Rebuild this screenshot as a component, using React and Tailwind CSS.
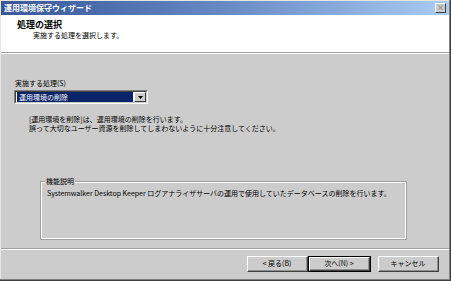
import React from "react";

const font = { fontFamily: '"Noto Sans CJK JP", "Noto Sans", sans-serif' };

function Btn({ children, def }) {
  return (
    <div className={`h-[16px] ${def ? "border border-black" : ""}`}>
      <div className="h-full border-t border-l border-white border-r border-b border-r-[#404040] border-b-[#404040] bg-[#cccccc]">
        <div className="h-full flex items-center justify-center border-r border-b border-r-[#909090] border-b-[#909090] text-[7px] leading-none text-black">
          {children}
        </div>
      </div>
    </div>
  );
}

export default function App() {
  return (
    <div className="w-[451px] h-[281px] bg-[#404040] pr-px pb-px" style={font}>
      <div className="w-full h-full bg-[#808080] pr-px pb-px">
        <div className="w-full h-full bg-[#cccccc] border-l border-t border-l-[#e8e6e0] border-t-[#e8e6e0] flex flex-col">
          {/* Title bar */}
          <div className="h-[14px] bg-[linear-gradient(90deg,#37579a_0%,#5d7fbb_40%,#7b9dd2_65%,#a8ccf2_100%)] flex items-center pl-[3px] pr-[3px]">
            <span className="text-white font-bold text-[8px] leading-none flex-1">運用環境保守ウィザード</span>
            <div className="w-[11px] h-[10px] bg-[#cccccc] border-t border-l border-white border-r border-b border-r-[#404040] border-b-[#404040] flex items-center justify-center">
              <span className="text-[#909090] text-[8px] leading-none font-bold">×</span>
            </div>
          </div>
          {/* Header */}
          <div className="h-[37px] bg-white pl-[16px] pt-[5px]">
            <div className="text-[9px] leading-[10px] font-bold text-black">処理の選択</div>
            <div className="text-[7px] leading-[9px] text-black pl-[16px] mt-[1px]">実施する処理を選択します。</div>
          </div>
          <div className="h-px bg-[#a0a0a0]" />
          <div className="h-px bg-white" />
          {/* Body */}
          <div className="flex-1 flex flex-col">
            <div className="pl-[14px] pt-[25px] text-[7px] leading-[9px] text-black">実施する処理(S)</div>
            <div className="ml-[13px] mt-[2px] w-[134px] h-[14px] border-t border-l border-[#808080] border-r border-b border-r-white border-b-white">
              <div className="w-full h-full border-t border-l border-[#404040] border-r border-b border-r-[#cccccc] border-b-[#cccccc] bg-white flex items-stretch pl-px">
                <div className="flex-1 bg-[#0a246a] flex items-center pl-[2px] overflow-hidden">
                  <span className="text-white text-[7px] leading-[9px] whitespace-nowrap">運用環境の削除</span>
                </div>
                <div className="w-[12px] ml-px bg-[#cccccc] border-t border-l border-white border-r border-b border-r-[#404040] border-b-[#404040] flex items-center justify-center">
                  <svg width="5" height="3" viewBox="0 0 5 3"><path d="M0 0H5L2.5 3Z" fill="#000" /></svg>
                </div>
              </div>
            </div>
            <div className="pl-[28px] mt-[11px] text-[7px] leading-[9px] text-black">
              <div>[運用環境を削除]は、運用環境の削除を行います。</div>
              <div>誤って大切なユーザー資源を削除してしまわないように十分注意してください。</div>
            </div>
            {/* Group box */}
            <div className="relative ml-[39px] mt-[48px] w-[367px] h-[59px] border border-[#a0a0a0]">
              <div className="w-full h-full border border-white pl-[5px] pt-[6px]">
                <div className="text-[7px] leading-[9px] text-black">Systemwalker Desktop Keeper ログアナライザサーバの運用で使用していたデータベースの削除を行います。</div>
              </div>
              <div className="absolute left-[4px] top-[-5px] bg-[#cccccc] px-px text-[7px] leading-[9px] text-black">機能説明</div>
            </div>
            <div className="mt-[8px] h-px bg-[#a0a0a0]" />
            <div className="h-px bg-white" />
            <div className="flex pl-[246px] pt-[6px]">
              <div className="w-[61px]"><Btn>&lt; 戻る(B)</Btn></div>
              <div className="w-[63px]"><Btn def>次へ(N) &gt;</Btn></div>
              <div className="w-[61px] ml-[7px]"><Btn>キャンセル</Btn></div>
            </div>
          </div>
        </div>
      </div>
    </div>
  );
}
